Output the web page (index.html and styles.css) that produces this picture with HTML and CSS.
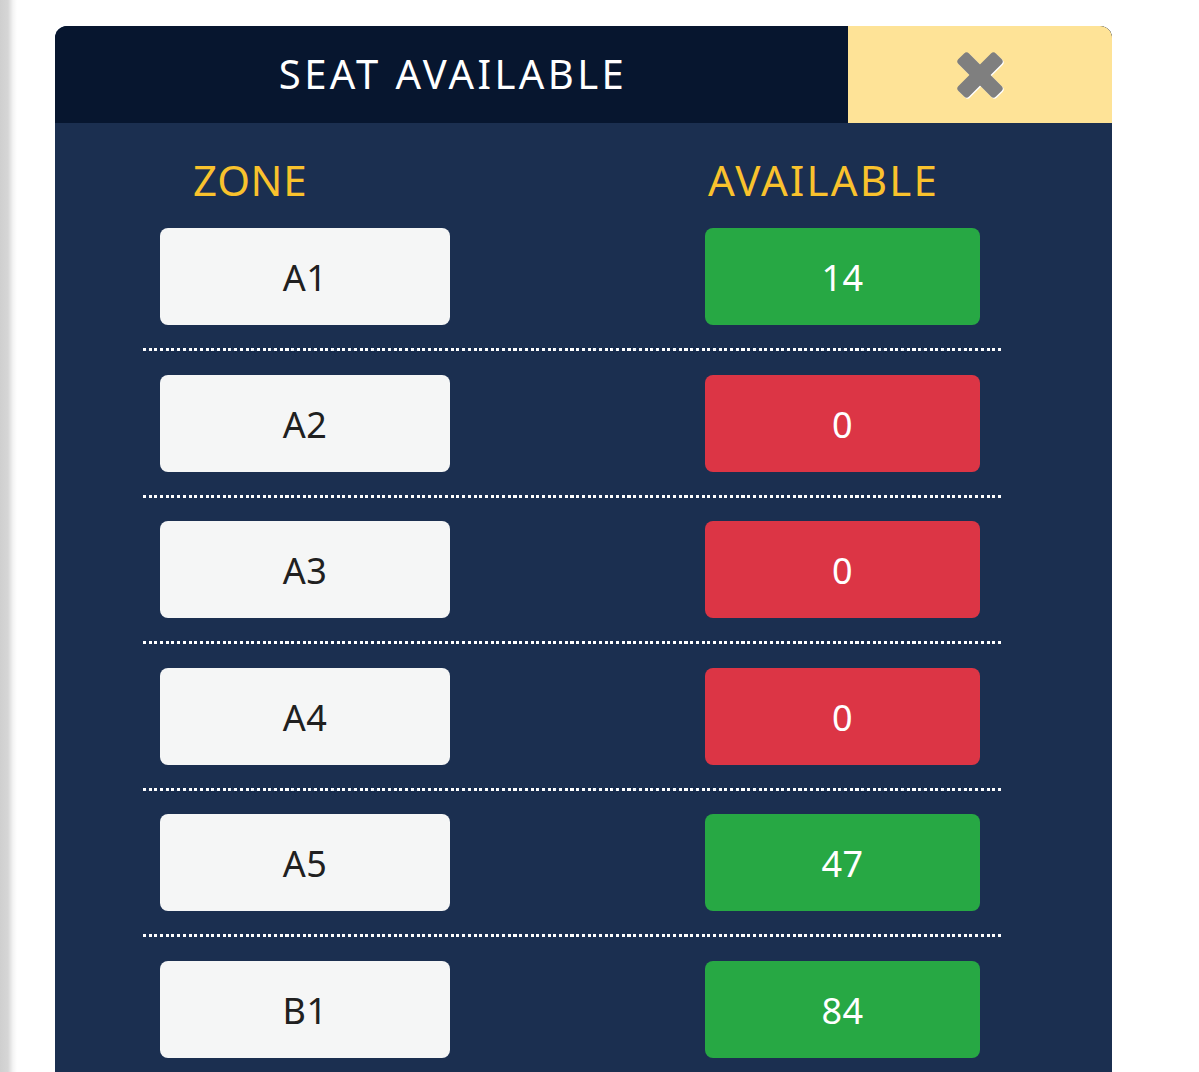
FILE: index.html
```html
<!DOCTYPE html>
<html lang="en">
<head>
<meta charset="utf-8">
<title>Seat Available</title>
<link rel="stylesheet" href="styles.css">
</head>
<body>
<div class="modal">
  <div class="modal-head">
    <div class="modal-title">SEAT AVAILABLE</div>
    <button class="close-btn" type="button" aria-label="Close">
      <svg class="close-icon" width="52" height="52" viewBox="0 0 52 52">
        <g transform="translate(26 26)">
          <rect x="-26.5" y="-7.5" width="53" height="15" rx="3.5" transform="rotate(45)" fill="#7f7f7f"/>
          <rect x="-26.5" y="-7.5" width="53" height="15" rx="3.5" transform="rotate(-45)" fill="#7f7f7f"/>
        </g>
      </svg>
    </button>
  </div>
  <div class="modal-body">
    <div class="col-heads">
      <div class="col-zone">ZONE</div>
      <div class="col-avail">AVAILABLE</div>
    </div>
    <div class="row">
      <div class="zone-box">A1</div>
      <div class="avail-box ok">14</div>
    </div>
    <div class="sep"></div>
    <div class="row">
      <div class="zone-box">A2</div>
      <div class="avail-box none">0</div>
    </div>
    <div class="sep"></div>
    <div class="row">
      <div class="zone-box">A3</div>
      <div class="avail-box none">0</div>
    </div>
    <div class="sep"></div>
    <div class="row">
      <div class="zone-box">A4</div>
      <div class="avail-box none">0</div>
    </div>
    <div class="sep"></div>
    <div class="row">
      <div class="zone-box">A5</div>
      <div class="avail-box ok">47</div>
    </div>
    <div class="sep"></div>
    <div class="row">
      <div class="zone-box">B1</div>
      <div class="avail-box ok">84</div>
    </div>
  </div>
</div>
</body>
</html>
```

FILE: styles.css
```css
* { box-sizing: border-box; }

html, body { height: 100%; }

body {
  margin: 0;
  padding: 26px 0 0 55px;
  font-family: "Noto Sans", "Open Sans", sans-serif;
  background: linear-gradient(to right, #cfcfcf 0, #d6d6d6 8px, #f4f4f4 13px, #ffffff 17px) no-repeat;
  background-color: #fff;
  overflow: hidden;
}

.modal {
  width: 1057px;
  border-radius: 12px;
  overflow: hidden;
  background: #1b2f50;
}

.modal-head {
  display: flex;
  height: 97px;
  background: #07162f;
}

.modal-title {
  flex: 1;
  display: flex;
  align-items: center;
  justify-content: center;
  color: #ffffff;
  font-size: 40px;
  letter-spacing: 3.4px;
  padding-left: 3px;
  padding-bottom: 2px;
}

.close-btn {
  width: 264px;
  border: 0;
  margin: 0;
  padding: 0;
  background: #fee397;
  display: flex;
  align-items: center;
  justify-content: center;
  cursor: pointer;
}

.close-icon {
  display: block;
  filter: drop-shadow(1px 1.5px 0 #ffffff);
}

.modal-body {
  padding: 0 105px 14px 88px;
}

.col-heads {
  display: flex;
  height: 105px;
  align-items: center;
  color: #f9c22d;
  font-size: 42px;
  padding-top: 8px;
}

.col-zone { margin-left: 50px; width: 515px; letter-spacing: 0.6px; }
.col-avail { letter-spacing: 2.2px; }

.row {
  display: flex;
  padding-left: 17px;
  margin-bottom: 23px;
}

.zone-box,
.avail-box {
  height: 97px;
  border-radius: 8px;
  display: flex;
  align-items: center;
  justify-content: center;
  font-size: 36px;
  letter-spacing: 0.5px;
  padding-top: 2px;
}

.zone-box {
  width: 290px;
  background: #f5f6f6;
  color: #202020;
}

.avail-box {
  width: 275px;
  margin-left: 255px;
  color: #ffffff;
}

.avail-box.ok { background: #27a844; }
.avail-box.none { background: #dc3545; }

.sep {
  width: 861px;
  height: 3px;
  margin-bottom: 23.6px;
  background: repeating-linear-gradient(90deg, #ffffff 0 3px, transparent 3px 5.7px);
}
```
